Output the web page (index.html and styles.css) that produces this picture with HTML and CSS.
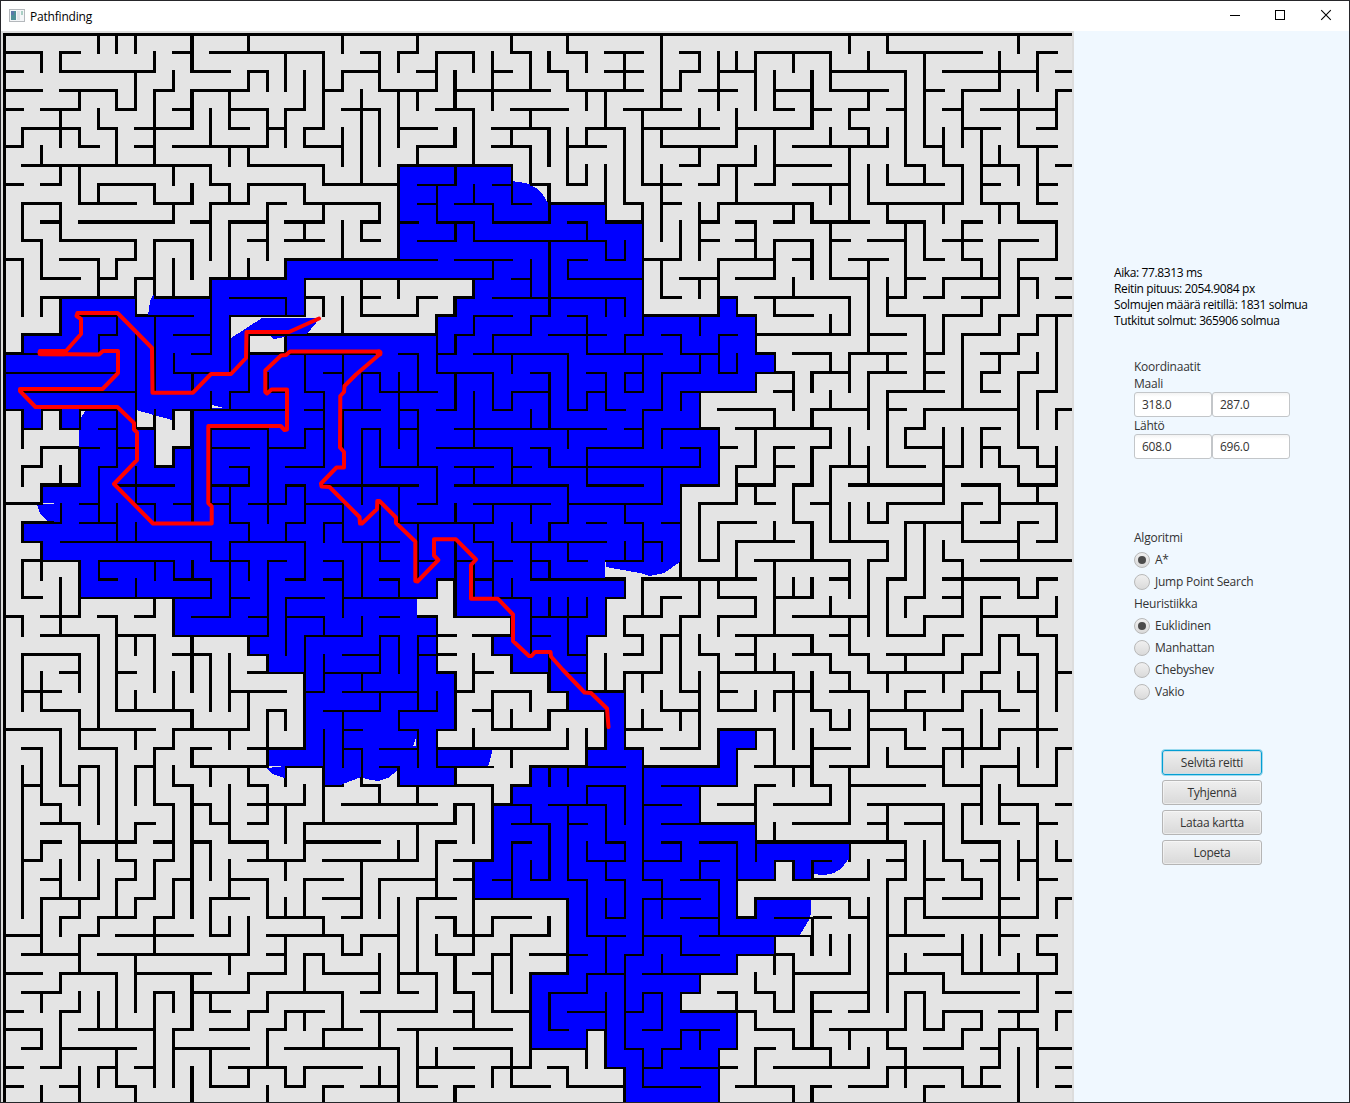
FILE: index.html
```html
<!DOCTYPE html>
<html lang="fi">
<head>
<meta charset="utf-8">
<title>Pathfinding</title>
<link rel="stylesheet" href="styles.css">
</head>
<body>
<div class="window">
  <header class="titlebar">
    <svg class="app-icon" width="16" height="14" viewBox="0 0 16 14">
      <rect x="0.5" y="0.5" width="15" height="12" fill="#f4f6f8" stroke="#b4b8bc"/>
      <rect x="2" y="2" width="5" height="9" fill="#4f8f96"/>
      <rect x="2" y="2" width="3" height="4" fill="#5a78a8"/>
      <rect x="8" y="2" width="3" height="9" fill="#e2e5e8"/>
      <rect x="12" y="2" width="2" height="4" fill="#a9cfc4"/>
    </svg>
    <span class="title">Pathfinding</span>
    <div class="controls">
      <svg width="46" height="29" viewBox="-1 0 46 29"><path d="M18 14.5h10" stroke="#000"/></svg>
      <svg width="46" height="29" viewBox="-1 0 46 29"><rect x="17.5" y="9.5" width="9" height="9" fill="none" stroke="#000"/></svg>
      <svg width="46" height="29" viewBox="-1 0 46 29"><path d="M17.2 9.200l9.600 9.600M26.800 9.200l-9.600 9.600" stroke="#000" stroke-width="1.1" fill="none"/></svg>
    </div>
  </header>
  <div class="content">
    <div class="map" id="map"></div>
    <aside class="panel">
      <div class="stats">
        <div>Aika: 77.8313 ms</div>
        <div>Reitin pituus: 2054.9084 px</div>
        <div>Solmujen määrä reitillä: 1831 solmua</div>
        <div>Tutkitut solmut: 365906 solmua</div>
      </div>
      <div class="coords">
        <div class="label">Koordinaatit</div>
        <div class="label">Maali</div>
        <div class="fields"><div class="field">318.0</div><div class="field">287.0</div></div>
        <div class="label">Lähtö</div>
        <div class="fields"><div class="field">608.0</div><div class="field">696.0</div></div>
      </div>
      <div class="options">
        <div class="option">Algoritmi</div>
        <div class="option"><span class="radio on"></span>A*</div>
        <div class="option"><span class="radio"></span>Jump Point Search</div>
        <div class="option">Heuristiikka</div>
        <div class="option"><span class="radio on"></span>Euklidinen</div>
        <div class="option"><span class="radio"></span>Manhattan</div>
        <div class="option"><span class="radio"></span>Chebyshev</div>
        <div class="option"><span class="radio"></span>Vakio</div>
      </div>
      <div class="buttons">
        <button class="btn focused">Selvitä reitti</button>
        <button class="btn">Tyhjennä</button>
        <button class="btn">Lataa kartta</button>
        <button class="btn">Lopeta</button>
      </div>
    </aside>
  </div>
</div>
<script src="maze.js"></script>
</body>
</html>
```
FILE: styles.css
```css
* { box-sizing: border-box; }
body { margin: 0; font-family: "Open Sans", "Noto Sans", sans-serif; font-size: 12px; color: #333; }
.window { width: 1350px; height: 1103px; border: 1px solid #26262a; display: flex; flex-direction: column; background: #f0f8ff; overflow: hidden; }
.titlebar { height: 30px; flex: none; background: #fff; display: flex; align-items: center; padding-left: 8px; color: #000; }
.app-icon { display: block; margin-top: -1px; }
.title { margin-left: 5px; letter-spacing: -0.2px; line-height: 16px; padding-top: 1px; }
.controls { margin-left: auto; display: flex; height: 29px; align-self: flex-start; }
.controls svg { display: block; }
.content { flex: 1; display: flex; min-height: 0; }
.map { width: 1073px; flex: none; background: #dcdcdc; overflow: hidden; }
.map svg { display: block; }
.panel { flex: 1; background: #f0f8ff; display: flex; flex-direction: column; letter-spacing: -0.24px; padding-top: 234px; }
.stats { margin-left: 40px; line-height: 16px; color: #000; white-space: nowrap; letter-spacing: -0.38px; }
.coords { margin: 29px 0 0 60px; }
.label { height: 17px; line-height: 18px; }
.fields { display: flex; }
.field { width: 78px; height: 25px; border: 1px solid #c3c6c9; border-radius: 3px; background: linear-gradient(#f3f3f3, #fff 4px); padding-left: 7px; line-height: 23px; }
.options { margin: 68px 0 0 60px; }
.option { height: 22px; display: flex; align-items: center; line-height: 16px; }
.radio { width: 16px; height: 16px; border-radius: 50%; border: 1px solid #b8b8b8; background: linear-gradient(#f0f0f0, #dadada); margin-right: 5px; display: flex; align-items: center; justify-content: center; }
.radio.on::after { content: ""; width: 8px; height: 8px; border-radius: 50%; background: #4c4c4c; }
.buttons { margin: 47px 0 0 88px; display: flex; flex-direction: column; gap: 5px; width: 100px; }
.btn { height: 25px; padding: 0; border: 1px solid #b5b5b5; border-radius: 3px; background: linear-gradient(#efefef, #d9d9d9); box-shadow: inset 0 0 0 1px rgba(255,255,255,.45); font: inherit; letter-spacing: inherit; color: #333; line-height: 23px; }
.btn.focused { border-color: #039ed3; box-shadow: 0 0 0 .7px #7fcfe9, inset 0 0 0 1px #c9dfe8; }
```
FILE: maze.js
```javascript
// Horizontal walls: one line per grid row, "from-to" in grid columns.
const H = `0-57
0-2 3-4 9-10 11-17 19-20 21-22 23-25 27-28 30-31 32-34 36-37 40-44 47-52 55-56
0-1 3-8 10-12 13-14 18-20 22-23 26-27 29-30 32-34 36-37 38-40 44-48 50-55 56-57
0-2 3-6 8-9 10-13 17-18 20-23 24-29 30-34 35-36 37-39 41-43 44-47 49-50 51-53 56-57
0-1 2-4 6-7 9-10 12-14 15-16 18-20 23-25 27-30 33-36 41-42 43-44 45-46 47-48 50-51 52-56
1-4 5-6 7-10 12-13 14-15 16-17 21-23 26-29 31-33 34-38 39-43 45-46 51-53 55-56
0-1 4-5 7-8 9-14 16-18 22-24 26-28 30-32 35-39 42-47 49-50 54-56
1-11 13-17 21-27 36-37 38-40 41-44 48-49 50-51 52-54 56-57
0-1 2-3 5-8 11-12 13-16 17-21 22-24 26-27 28-29 30-31 34-36 37-38 40-41 42-45 47-50 52-53 55-56
1-3 4-7 8-10 11-13 14-15 16-20 22-23 24-26 27-28 29-32 33-34 35-36 38-43 46-51 52-54 55-56
2-3 4-9 10-11 12-14 15-17 19-20 21-22 23-25 26-29 30-31 32-34 37-38 39-40 41-42 43-46 47-49 51-52 54-56
1-2 3-7 8-10 13-14 15-17 19-20 22-24 25-32 37-38 39-40 41-43 44-45 46-48 50-52 53-55
0-1 3-5 6-7 15-23 24-27 30-31 32-33 34-36 38-41 42-43 45-47 49-50 51-52 54-56
2-4 5-6 7-8 11-15 16-26 27-28 30-34 36-38 39-41 44-46 48-49 50-53 54-55 56-57
2-7 8-11 12-15 16-17 19-20 22-23 24-25 26-33 35-36 38-39 40-45 47-48 49-50 51-53 56-57
4-6 7-10 12-16 19-22 23-24 25-27 28-29 30-31 34-38 39-40 41-43 47-49 50-52 53-54 55-57
1-3 5-6 9-11 13-23 24-25 26-28 29-32 33-34 35-36 38-39 40-45 46-48 51-53 54-55
0-5 10-11 13-20 21-22 23-24 25-30 31-35 36-38 40-41 42-44 45-48 49-50 52-54
0-6 9-12 17-18 19-20 23-26 28-29 31-32 33-34 35-37 38-39 40-42 43-45 46-48 49-50 52-53 54-55
1-7 12-13 14-15 16-17 20-23 27-29 31-32 33-34 36-40 41-42 47-50 52-53 55-56
0-1 2-3 4-6 9-15 16-17 18-20 21-22 23-24 26-27 30-31 32-33 34-35 38-41 43-46 47-48 49-54 56-57
1-2 3-4 5-6 7-8 11-14 16-17 19-20 21-22 24-32 33-34 35-38 39-44 48-49 52-53
2-5 6-7 9-10 11-13 14-16 23-27 28-29 31-34 36-37 38-39 41-42 43-44 48-50 52-53 54-55
1-2 5-6 8-9 12-13 15-17 20-23 24-26 27-28 29-37 39-40 41-42 44-46 47-49 50-51 53-54 55-56
2-4 6-9 11-13 15-16 17-22 24-30 31-34 36-38 39-41 42-43 45-50 51-53 54-56
0-2 4-5 7-8 9-10 11-12 13-15 16-18 22-23 25-29 30-35 37-39 40-41 43-44 47-50 51-52 53-56
1-3 4-6 12-13 15-16 17-18 21-26 29-30 31-32 33-34 35-36 38-40 42-43 46-47 48-51 52-53 54-55
1-2 3-11 12-16 18-21 25-26 27-32 34-35 39-42 44-47 51-54 55-56
1-4 5-9 11-13 14-15 17-18 20-21 22-23 24-25 26-27 28-29 30-31 32-34 37-38 40-45 46-47 50-51 52-57
5-6 9-11 15-16 17-18 20-21 23-24 25-26 28-33 34-40 44-45 47-48 50-54 55-56
1-2 4-11 12-13 15-17 18-23 26-28 32-33 35-36 38-40 41-43 48-49 50-51 52-53 54-55
0-1 2-4 5-6 7-8 10-12 13-14 15-17 20-21 22-23 24-27 28-31 33-35 36-37 38-40 42-46 49-51 52-56
2-5 6-8 9-14 16-19 20-21 22-24 25-27 28-29 31-32 33-34 35-36 39-43 44-45 47-49 50-51 53-54 55-56
1-4 9-11 13-14 18-20 22-24 26-27 30-31 33-34 37-38 39-40 42-44 45-46 47-50 51-52 54-55
3-4 6-7 13-16 17-20 23-24 25-26 27-29 30-31 33-35 38-42 44-45 46-51 52-53 56-57
1-3 12-15 16-17 18-22 24-25 26-28 29-30 31-33 36-37 38-39 41-43 44-46 48-49 51-53 54-55
2-4 6-10 14-15 17-20 21-23 25-26 29-32 35-37 38-40 43-44 46-51 53-54
0-3 4-8 9-13 18-19 21-22 23-24 26-29 33-35 38-41 44-45 46-48 50-51 53-56
1-2 4-6 8-9 10-11 13-16 18-19 20-22 23-30 31-32 33-34 35-37 39-40 43-45 48-49 50-53 56-57
4-5 7-8 10-14 15-17 20-21 23-26 28-33 34-38 40-43 44-46 47-50 52-54
1-2 3-4 9-10 13-14 17-18 19-20 21-26 27-28 31-33 35-39 40-41 43-44 45-49 50-52 54-56
2-3 8-9 10-11 13-16 18-23 24-25 26-28 29-32 34-36 38-40 41-44 46-50 51-52 53-55 56-57
2-4 7-8 11-12 13-14 16-24 27-29 30-31 35-40 42-45 46-47 48-50 53-54 55-56
2-3 4-7 8-9 10-11 12-14 16-20 23-24 27-28 32-33 35-36 37-39 40-48 51-53
1-2 6-7 8-9 13-16 17-22 24-26 31-33 34-36 37-38 41-42 43-44 47-48 50-51 52-53 54-55 56-57
2-3 6-7 9-10 12-14 16-18 20-23 24-25 26-27 28-29 30-31 32-33 34-35 36-38 39-41 42-46 47-48 49-50 51-52 55-56
2-5 7-8 11-13 17-19 22-24 25-30 34-37 40-45 48-49 50-52 53-54 56-57
3-4 5-7 8-9 14-17 18-19 23-24 26-28 32-33 36-38 39-40 41-44 45-46 49-55
0-2 4-5 6-10 11-12 14-18 19-21 24-26 27-29 31-33 34-36 37-43 47-50 53-54 55-56
1-4 5-13 14-15 16-17 18-19 23-25 26-27 28-31 33-34 36-38 39-42 49-51 55-56
0-2 3-6 7-11 13-15 17-20 21-23 25-26 28-30 31-33 34-39 42-45 47-50 51-56
1-3 8-9 10-13 14-18 19-20 21-22 24-25 29-31 34-35 36-37 38-39 40-41 43-46 48-49 50-54 56-57
0-1 3-4 11-12 13-14 15-17 19-23 24-25 26-28 30-32 33-34 36-40 41-42 43-44 45-46 50-52 53-55 56-57
0-2 4-8 9-10 11-13 14-15 17-19 21-27 29-30 31-32 34-35 36-38 40-42 44-48 49-50 51-52 53-55
1-2 3-7 9-13 15-21 24-27 28-31 33-34 35-36 38-39 40-41 42-44 47-48 49-51 52-53 55-57
0-1 2-3 5-6 7-8 12-15 16-19 22-25 26-28 29-30 32-33 34-35 36-39 41-46 47-51 52-53 56-57
0-1 3-4 6-7 11-13 15-16 17-18 19-21 22-23 24-25 27-29 30-33 34-37 39-42 43-44 45-47 49-50 51-53 56-57`;

// Vertical walls: one line per grid column, "from-to" in grid rows.
const V = `0-57
5-6 9-11 12-15 16-17 20-22 23-24 26-27 28-30 31-32 33-36 39-47
1-2 6-7 11-13 14-15 20-21 22-23 24-25 27-29 34-36 38-41 43-44 46-49 51-52 53-54 56-57
1-2 4-6 7-8 9-11 14-16 20-21 23-24 25-26 29-32 37-40 41-42 44-46 47-48 50-51 52-55
3-4 5-6 7-9 20-21 22-24 28-31 33-35 36-38 39-41 42-45 46-47 48-50 51-52 55-57
0-1 4-5 8-9 12-14 16-17 23-26 28-29 32-37 39-42 44-46 47-48 51-53 55-56
0-1 3-4 5-7 12-13 15-16 20-23 25-27 31-36 38-44 45-47 50-53 54-56
0-1 2-4 11-12 13-15 16-21 23-25 26-27 29-30 32-33 35-36 37-38 39-41 42-43 44-45 46-47 49-52 56-57
1-2 3-7 8-9 11-14 15-19 20-23 25-26 28-29 30-31 32-35 38-41 44-46 47-49 51-56
2-3 7-8 9-10 12-14 17-18 20-21 22-23 28-29 30-32 34-36 37-38 39-40 41-44 45-47 51-52 53-56
0-2 3-5 8-9 11-13 18-19 20-26 28-29 32-35 36-37 38-39 40-47 50-53 55-57
4-6 7-8 9-12 13-17 19-20 21-25 27-28 29-30 33-36 39-40 41-42 43-45 46-48 51-52 54-56
3-5 6-7 8-9 10-13 15-18 19-20 24-26 27-31 33-36 37-38 40-43 44-46 47-48 49-50
0-1 2-3 6-7 8-9 12-13 16-19 23-24 26-27 28-29 32-33 35-37 39-40 47-49 50-51 52-53 55-56
2-3 4-6 9-12 18-19 21-26 28-32 33-34 36-39 40-42 43-44 45-47 51-52 53-55 56-57
1-3 4-6 12-13 14-15 16-17 24-25 26-27 30-33 36-37 39-40 41-43 44-45 46-47 48-50 52-53 55-56
2-4 5-6 8-9 10-11 13-15 17-19 21-22 24-26 27-29 32-38 40-41 42-44 45-47 49-51 52-53 55-56
1-5 7-8 9-10 14-15 19-23 26-27 31-32 33-35 37-42 47-48 49-50 53-54 56-57
0-1 2-3 5-7 10-12 14-16 17-19 20-22 25-27 28-31 36-39 48-49 51-53
3-8 10-11 13-15 18-20 21-25 27-30 31-32 34-35 38-40 44-47 48-49
1-3 4-7 9-10 18-19 21-23 25-28 32-34 35-36 40-41 45-47 49-51 52-54 55-56
1-2 3-6 7-12 13-14 18-22 24-26 29-30 32-34 36-37 39-40 43-44 46-51 54-57
0-1 3-4 6-7 14-15 17-19 20-23 26-29 32-36 37-39 40-41 42-44 46-50 53-56
1-3 8-10 15-18 23-25 29-30 31-34 35-36 37-39 43-46 48-49 50-52 54-55
2-4 5-6 7-8 10-11 14-15 16-17 18-20 25-26 27-31 34-37 39-40 41-42 47-48 49-51 56-57
1-2 4-7 8-9 10-11 13-14 15-16 19-22 23-24 26-27 28-30 33-35 37-38 41-43 44-49 51-53
1-4 9-10 12-13 16-17 18-20 25-26 27-30 32-33 35-37 40-44 47-48 49-52 55-56
0-1 5-6 7-9 17-18 19-20 22-24 26-27 29-30 31-32 33-34 36-37 38-39 40-41 43-46 48-51 54-56
1-3 4-5 6-8 12-14 15-16 20-21 25-26 27-29 30-33 35-36 39-40 41-42 44-45 50-55
1-2 5-7 8-10 11-15 18-21 22-23 26-27 28-29 30-31 33-35 36-37 39-40 42-45 47-48 51-53
0-1 2-3 5-8 12-13 17-20 21-22 24-26 27-28 30-33 35-36 37-38 39-40 41-45 46-50 55-56
1-2 3-4 5-6 7-8 10-11 15-17 19-20 22-24 30-31 32-35 37-39 40-41 43-44 45-48 50-51 53-55
3-5 7-10 11-12 14-15 18-20 30-32 33-35 36-38 41-43 44-45 46-47 48-50 51-55
1-3 5-9 11-12 14-15 16-17 18-19 25-26 27-28 29-30 31-32 34-38 40-42 43-44 45-47 49-54 55-57
4-8 9-16 17-19 20-22 26-28 29-31 32-33 34-35 36-37 38-45 46-49 51-52 54-56
0-4 5-6 7-11 12-14 18-20 21-22 23-25 27-28 30-31 32-34 35-36 45-47 49-50 51-53 54-55
2-3 10-12 16-17 19-20 24-29 31-35 36-37 43-44 48-49 51-52 53-54
1-2 4-5 6-7 9-12 13-14 15-16 17-18 19-21 22-23 25-28 29-31 32-33 34-38 40-42 44-45 50-51 53-54
1-4 7-8 9-10 12-15 16-18 21-24 26-28 29-30 31-32 33-36 37-39 45-48 54-57
1-2 4-6 7-9 14-15 17-18 23-25 27-29 38-40 43-47 49-50 51-54
1-4 6-7 10-12 15-17 18-19 21-23 24-25 30-31 32-34 35-36 37-38 40-44 46-47 50-51 52-53 54-56
2-4 5-8 11-13 14-15 17-18 20-21 22-24 26-27 28-32 33-34 35-36 37-39 42-43 44-45 48-50 51-52
1-2 9-10 13-14 18-20 24-26 29-30 34-38 39-40 44-45 49-52 53-54 56-57
2-5 9-10 11-13 18-19 20-21 22-24 26-28 29-30 32-33 34-36 37-40 44-45 47-49 51-54 56-57
1-3 5-6 8-9 10-13 15-16 17-18 19-20 21-22 23-27 30-31 33-34 36-37 40-41 48-49 54-55
0-1 4-5 6-10 14-16 17-19 21-23 25-27 28-30 31-33 34-35 36-37 39-42 43-44 46-47 48-50 53-54
1-2 3-4 5-6 7-9 12-17 18-21 22-24 25-26 28-32 33-34 35-39 44-45 46-52 54-55
0-1 5-6 7-8 9-10 13-15 17-18 19-23 25-26 27-28 29-32 34-35 38-39 41-43 45-52 53-54 55-56
2-7 10-14 21-22 26-29 30-31 33-34 35-36 37-38 43-45 46-48 49-50 51-53 54-56
1-6 7-8 10-12 15-19 20-21 26-30 31-32 36-37 43-47 51-53 56-57
5-7 9-10 13-14 15-17 21-25 27-28 32-33 34-35 38-40 41-44 50-51 52-53
3-6 7-9 10-12 16-20 21-23 25-27 28-31 33-34 35-36 37-39 41-43 44-45 48-50 53-54 55-56
5-9 12-13 14-15 18-19 21-23 30-33 34-35 36-38 39-42 45-46 48-50 52-53 55-56
1-3 6-7 9-10 11-14 15-16 17-18 22-23 24-26 32-34 35-36 37-38 40-42 43-49 53-55
0-1 3-6 7-8 9-10 12-15 16-17 18-22 23-24 26-28 29-30 32-33 34-35 38-40 43-45 49-50 52-53 54-57
1-3 6-9 13-14 15-16 17-18 19-21 22-23 24-25 29-30 31-32 33-39 41-47 48-49 50-52 53-56
3-5 10-12 15-19 20-21 22-24 25-27 30-31 32-36 38-40 43-44 46-47 49-50 52-53`;

// Explored cells from row 7 downwards, as column ranges.
const EXPLORED = `21-27
21-27
21-32
21-34
21-34
15-34
11-16 25-34
3-7 8-16 24-34 38-39
3-12 23-40
1-12 15-40
0-41
0-40
0-37
1-2 3-7 10-37
4-8 10-38
4-8 9-38
4-38
2-36
3-36
1-36
2-36
4-32
4-23 24-33
9-22 24-32
9-23 27-32
13-23 26-31
14-23 27-31
16-24 29-31
16-24 30-33
16-24 32-33
16-23 32-33 38-40
14-26 31-34 38-39
17-18 21-24 28-39
27-37
26-37
26-40
26-45
25-41 42-43
25-39
30-39 40-43
30-43
30-41
30-39
28-37
28-36
28-39
28-31 32-39
32-38
33-38
33-38`;

// Partly explored areas at the search front, in pixels.
const FRONT = [
  "511,181 519,182 529,184 538,189 543,195 548,203 548,204 511,204",
  "148,316 150,301 153,295 156,295 156,316",
  "231,338 262,318 320,318 307,334 285,334 285,337 274,339 268,334 249,334 249,374 231,374",
  "136,410 172,420 172,408 136,408",
  "37,505 40,513 47,521 60,522 60,503",
  "606,559 606,567 640,573 649,576 664,573 680,562 680,559",
  "267,768 272,774 285,778 285,766",
  "324,785 343,784 356,779 361,777 366,779 378,781 388,778 397,771 397,766 324,766",
  "812,859 812,874 824,875 834,873 842,868 849,858"
];
const UNEXPLORED = [
  "212,405 224,408 212,408",
  "81,411 85,411 81,418",
  "416,738 413,746 416,746",
  "493,749 488,767 495,767 495,749",
  "813,900 810,918 800,935 813,935"
];

const ROUTE = "319,318.5 289,332 246.500,332 246,358 231,374 211,374 193,392.700 152.500,392.700 152,348 117.500,313 77.500,313 76.500,316 81,319 81,334 66,351 40,351 40,354 99,354.500 103,351 118,351 118,373 102.500,389 20,389 20,391 35.500,407 117.500,407 134,423 134,429.500 137,432.500 137,460 114,484 153,523.500 211.700,523.500 211.700,506.500 208.300,503 208.300,426 280.700,426 284.500,430 287,429.500 287,389.500 271.500,389.500 267,393.500 265.300,392 265.300,370.500 281,355.500 286,355 290,351.500 379,351.500 380,354 356,374.500 344.500,386 344,392 340.300,396 340,447.500 344,452 344,467.500 336.500,467.500 321,483.500 321.500,486.500 329.500,487 359.500,517 360,523.500 362,523.500 377,509 377.300,501 379.500,501 396,517.500 396,523 415.300,541.500 415.300,581 417.500,581.500 438.300,560 434,555.500 434,539.300 456,539.300 476,559.500 471,565 471,598.700 497.700,598.700 513,614.500 513,641 529,656 531.500,656 535,652 550.500,652 551,656.500 562.500,669.500 584.500,692.500 591,693 607,708.500 608.500,727";

const ORIGIN_X = 3, ORIGIN_Y = 33, STEP = 18.8;
// Grid lines whose rounded position falls one pixel early, and those drawn four pixels wide.
const EARLY = [10, 15, 20, 24, 25, 29, 30, 34, 35, 39, 40, 43, 44, 45, 48, 49, 50, 53, 54, 55];
const THICK = [10, 24, 29, 43];
const start = (o, i) => Math.floor(o + STEP * i + 1e-6) - (EARLY.includes(i) ? 1 : 0);
const width = i => THICK.includes(i) ? 4 : 3;
const box = (x1, y1, x2, y2) => `M${x1} ${y1}H${x2}V${y2}H${x1}Z`;
const ranges = line => line.split(" ").map(r => r.split("-").map(Number));

function walls(inset) {
  let d = "";
  H.split("\n").forEach((line, r) => {
    const y = start(ORIGIN_Y, r);
    for (const [a, b] of ranges(line))
      d += box(start(ORIGIN_X, a) + inset, y + inset, Math.min(start(ORIGIN_X, b) + width(b), 1072), y + width(r));
  });
  V.split("\n").forEach((line, c) => {
    const x = start(ORIGIN_X, c);
    for (const [a, b] of ranges(line))
      d += box(x + inset, start(ORIGIN_Y, a) + inset, x + width(c), Math.min(start(ORIGIN_Y, b) + width(b), 1102));
  });
  return d;
}

let explored = "";
EXPLORED.split("\n").forEach((line, k) => {
  const r = k + 7;
  for (const [a, b] of ranges(line))
    explored += box(start(ORIGIN_X, a) + 1, start(ORIGIN_Y, r) + 1, start(ORIGIN_X, b) + 1, start(ORIGIN_Y, r + 1) + 1);
});
const polys = (list, fill) => list.map(p => `<polygon points="${p}" fill="${fill}"/>`).join("");

document.getElementById("map").innerHTML =
  `<svg width="1073" height="1071" viewBox="1 31 1073 1071" shape-rendering="crispEdges">
    <rect x="3" y="33" width="1069" height="1069" fill="#e4e4e4"/>
    <path d="${walls(0)}" fill="#000"/>
    <path d="${explored}" fill="#00f"/>
    ${polys(FRONT, "#00f")}${polys(UNEXPLORED, "#e4e4e4")}
    <path d="${walls(1)}" fill="#000"/>
    <polyline points="${ROUTE}" fill="none" stroke="#f00" stroke-width="4" stroke-linejoin="round" stroke-linecap="round" shape-rendering="auto"/>
    <path d="M41 352.700h23M379 353h0" stroke="#f00" stroke-width="7" stroke-linecap="round" shape-rendering="auto"/>
  </svg>`;
```
